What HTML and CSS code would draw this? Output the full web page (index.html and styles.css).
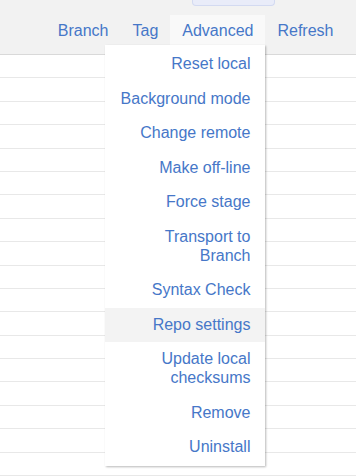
FILE: index.html
```
<!DOCTYPE html>
<html lang="en">
<head>
  <meta charset="UTF-8">
  <meta name="viewport" content="width=device-width, initial-scale=1.0">
  <title>Repository</title>
  <link rel="stylesheet" href="styles.css">
</head>
<body>
  <div class="header">
    <div class="search-stub"></div>
    <div class="nav">
      <div class="nav-item">Branch</div>
      <div class="nav-item">Tag</div>
      <div class="nav-item active">Advanced
        <div class="dropdown">
          <div class="dropdown-item">Reset local</div>
          <div class="dropdown-item">Background mode</div>
          <div class="dropdown-item">Change remote</div>
          <div class="dropdown-item">Make off-line</div>
          <div class="dropdown-item">Force stage</div>
          <div class="dropdown-item">Transport to Branch</div>
          <div class="dropdown-item">Syntax Check</div>
          <div class="dropdown-item hover">Repo settings</div>
          <div class="dropdown-item">Update local checksums</div>
          <div class="dropdown-item">Remove</div>
          <div class="dropdown-item">Uninstall</div>
        </div>
      </div>
      <div class="nav-item">Refresh</div>
    </div>
  </div>

  <div class="rows">
    <div class="row"></div><div class="row"></div><div class="row"></div>
    <div class="row"></div><div class="row"></div><div class="row"></div>
    <div class="row"></div><div class="row"></div><div class="row"></div>
    <div class="row"></div><div class="row"></div><div class="row"></div>
    <div class="row"></div><div class="row"></div><div class="row"></div>
    <div class="row"></div><div class="row"></div><div class="row"></div>
    <div class="row"></div>
  </div>
</body>
</html>
```

FILE: styles.css
```
body {
  margin: 0;
  font-family: "Liberation Sans", Arial, sans-serif;
  font-size: 16px;
  background-color: #fff;
  overflow: hidden;
}
.header {
  height: 54px;
  background-color: #f2f2f2;
  border-bottom: 1px solid #d9d9d9;
}
.search-stub {
  margin-left: 192px;
  width: 81px;
  height: 5px;
  background-color: #e9ecf9;
  border: 1px solid #d3daf1;
  border-top: none;
  border-radius: 0 0 4px 4px;
}
.nav {
  display: flex;
  justify-content: flex-end;
  margin-top: 9px;
  padding-right: 10.5px;
}
.nav-item {
  position: relative;
  padding: 0 12px;
  height: 30px;
  line-height: 32px;
  color: #4677c8;
  cursor: pointer;
}
.nav-item.active {
  background-color: #f9f9f9;
}
.dropdown {
  position: absolute;
  top: 30px;
  right: 0;
  width: 160px;
  box-sizing: border-box;
  padding: 2px 0 1px;
  line-height: normal;
  background-color: #fff;
  box-shadow: 1px 1px 2px rgba(0, 0, 0, 0.28);
  z-index: 10;
}
.dropdown-item {
  padding: 8px 15px 8px 14px;
  line-height: 18.6px;
  text-align: right;
  color: #4677c8;
}
.dropdown-item.hover {
  background-color: #f3f3f3;
}
.row {
  height: 22.4px;
  border-bottom: 1px solid #e8e8e8;
}
```
